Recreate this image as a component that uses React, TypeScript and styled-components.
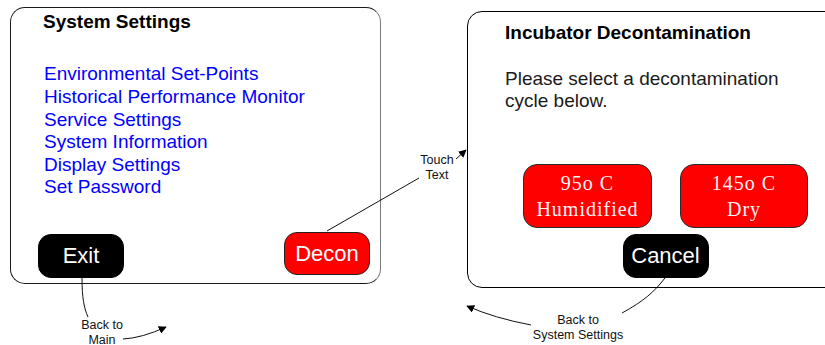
import styled, { createGlobalStyle } from "styled-components";

const GlobalStyle = createGlobalStyle`
  html, body {
    margin: 0;
    padding: 0;
    background: #ffffff;
  }
  body {
    font-family: "Liberation Sans", Arial, sans-serif;
  }
`;

const Canvas = styled.div`
  position: relative;
  width: 825px;
  height: 345px;
  overflow: hidden;
  background: #ffffff;
`;

// each screen is a node on the storyboard canvas
const Screen = styled.section<{ $x: number; $y: number; $w: number; $h: number }>`
  position: absolute;
  left: ${(p) => p.$x}px;
  top: ${(p) => p.$y}px;
  width: ${(p) => p.$w}px;
  height: ${(p) => p.$h}px;
  box-sizing: border-box;
  border: 1px solid #1a1a1a;
  border-radius: 15px;
  background: #ffffff;
  display: flex;
  flex-direction: column;
`;

const SettingsScreen = styled(Screen)`
  padding: 3px 10px 5px 27px;
  border-right-color: #7a7a7a;
`;

const DeconScreen = styled(Screen)`
  padding: 10px 0 9px 37px;
  border-color: #000000;
`;

const Title = styled.h1<{ $indent?: number }>`
  margin: 0 0 0 ${(p) => p.$indent ?? 0}px;
  font-size: 19px;
  font-weight: bold;
  line-height: 21.85px;
  color: #000000;
`;

const Menu = styled.ul`
  list-style: none;
  margin: 30.5px 0 0 6px;
  padding: 0;
`;

const MenuItem = styled.li`
  font-size: 19px;
  line-height: 22.6px;
  color: #0000ff;
  white-space: nowrap;
`;

const Footer = styled.div`
  margin-top: auto;
  display: flex;
  justify-content: space-between;
  align-items: flex-end;
`;

const Pill = styled.button<{ $tone: "black" | "red"; $lift?: number }>`
  width: 86px;
  height: ${(p) => (p.$tone === "red" ? 43 : 44)}px;
  margin: 0 0 ${(p) => p.$lift ?? 0}px 0;
  padding: 0;
  box-sizing: border-box;
  border: 1px solid ${(p) => (p.$tone === "red" ? "#222222" : "#000000")};
  border-radius: 13px;
  background: ${(p) => (p.$tone === "red" ? "#ff0000" : "#000000")};
  color: #ffffff;
  font-family: "Liberation Sans", Arial, sans-serif;
  font-size: 22px;
  display: flex;
  align-items: center;
  justify-content: center;
`;

const Prompt = styled.p`
  margin: 24px 0 0 0;
  width: 295px;
  font-size: 19px;
  line-height: 21.85px;
  color: #1a1a1a;
`;

const Choices = styled.div`
  margin: 52px 0 0 18px;
  display: inline-flex;
  flex-direction: column;
  align-items: center;
  align-self: flex-start;
  gap: 6px;
`;

const ChoiceRow = styled.div`
  display: flex;
  gap: 28px;
`;

const CycleButton = styled.button<{ $w: number }>`
  width: ${(p) => p.$w}px;
  height: 64px;
  padding: 0;
  box-sizing: border-box;
  border: 1px solid #2a2a2a;
  border-radius: 14px;
  background: #ff0000;
  color: #fff4f4;
  font-family: "Liberation Serif", "Times New Roman", serif;
  font-size: 20px;
  letter-spacing: 1px;
  line-height: 26px;
  display: flex;
  flex-direction: column;
  align-items: center;
  justify-content: center;
`;

const Note = styled.div<{ $x: number; $y: number }>`
  position: absolute;
  left: ${(p) => p.$x}px;
  top: ${(p) => p.$y}px;
  transform: translateX(-50%);
  font-size: 12.5px;
  line-height: 14.5px;
  color: #111111;
  text-align: center;
  white-space: nowrap;
`;

const Connectors = styled.svg`
  position: absolute;
  left: 0;
  top: 0;
  pointer-events: none;
`;

const menu = [
  "Environmental Set-Points",
  "Historical Performance Monitor",
  "Service Settings",
  "System Information",
  "Display Settings",
  "Set Password",
];

export default function App() {
  return (
    <Canvas>
      <GlobalStyle />

      <SettingsScreen $x={10} $y={7} $w={371} $h={277}>
        <Title $indent={5}>System Settings</Title>
        <Menu>
          {menu.map((m) => (
            <MenuItem key={m}>{m}</MenuItem>
          ))}
        </Menu>
        <Footer>
          <Pill $tone="black">Exit</Pill>
          <Pill $tone="red" $lift={3}>Decon</Pill>
        </Footer>
      </SettingsScreen>

      <DeconScreen $x={467} $y={11} $w={380} $h={277}>
        <Title>Incubator Decontamination</Title>
        <Prompt>Please select a decontamination cycle below.</Prompt>
        <Choices>
          <ChoiceRow>
            <CycleButton $w={129}>
              <span>95o C</span>
              <span>Humidified</span>
            </CycleButton>
            <CycleButton $w={128}>
              <span>145o C</span>
              <span>Dry</span>
            </CycleButton>
          </ChoiceRow>
          <Pill $tone="black">Cancel</Pill>
        </Choices>
      </DeconScreen>

      <Note $x={437} $y={153}>
        Touch
        <br />
        Text
      </Note>
      <Note $x={102} $y={318}>
        Back to
        <br />
        Main
      </Note>
      <Note $x={578} $y={313}>
        Back to
        <br />
        System Settings
      </Note>

      <Connectors width="825" height="345" viewBox="0 0 825 345">
        <defs>
          <marker id="head" viewBox="0 0 10 10" refX="9" refY="5" markerWidth="8" markerHeight="8" orient="auto" markerUnits="userSpaceOnUse">
            <path d="M0 0 L10 5 L0 10 z" fill="#000" />
          </marker>
        </defs>
        <g fill="none" stroke="#111" strokeWidth="1">
          <path d="M327 231 L419 178" />
          <path d="M456 159 L466 150" markerEnd="url(#head)" />
          <path d="M82 278 C82 298 84 308 88 317" />
          <path d="M123 339 Q142 338 166 327" markerEnd="url(#head)" />
          <path d="M665 278 C654 292 644 301 622 313" />
          <path d="M531 325 Q494 318 467 306" markerEnd="url(#head)" />
        </g>
      </Connectors>
    </Canvas>
  );
}
